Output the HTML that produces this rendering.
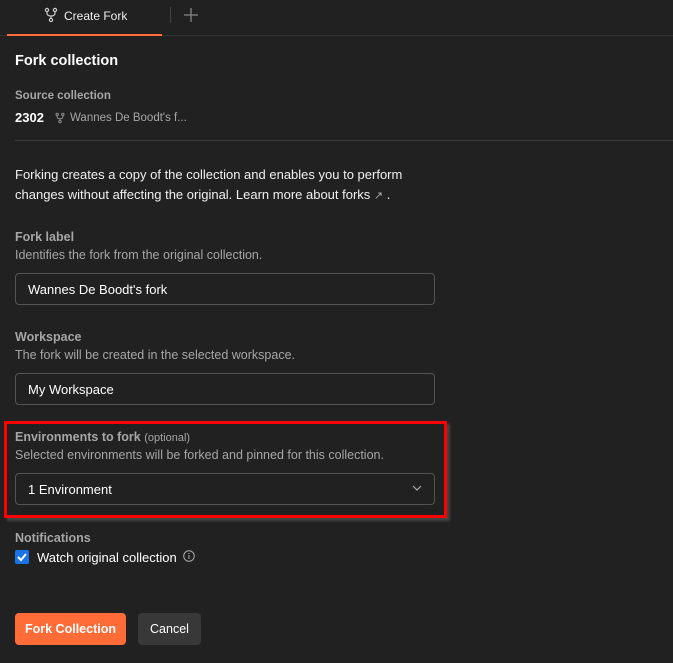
<!DOCTYPE html>
<html><head><style>
*{margin:0;padding:0;box-sizing:border-box}
body{width:673px;height:663px;background:#212121;font-family:"Liberation Sans",sans-serif;color:#fff;position:relative;overflow:hidden;font-size:13px}
.a{position:absolute;white-space:nowrap}
.lbl{color:#a6a6a6;font-weight:bold;font-size:12.5px}
.sub{color:#a6a6a6;font-size:12.5px}
.inp{position:absolute;left:15px;width:420px;height:32px;border:1px solid #555;border-radius:4px;padding:8px 12px;font-size:13px;color:#fff}
</style></head><body>
<div class="a" style="left:0;top:35px;width:673px;height:1px;background:#333"></div>
<div class="a" style="left:7px;top:34px;width:155px;height:2px;background:#ff6c37"></div>
<svg class="a" style="left:44px;top:7px" width="14" height="16" viewBox="0 0 14 16" fill="none" stroke="#ccc" stroke-width="1.2"><circle cx="3" cy="3" r="1.6"/><circle cx="11" cy="3" r="1.6"/><circle cx="7" cy="13" r="1.6"/><path d="M3 4.6v1.4q0 3 4 3q4 0 4-3V4.6M7 9v2.4"/></svg>
<div class="a" style="left:64px;top:9px;font-size:12px;color:#eee">Create Fork</div>
<div class="a" style="left:170px;top:7px;width:1px;height:16px;background:#444"></div>
<svg class="a" style="left:184px;top:8px" width="14" height="14" viewBox="0 0 14 14" stroke="#888" stroke-width="1.3"><path d="M7 0v14M0 7h14"/></svg>
<div class="a" style="left:15px;top:53px;font-size:14.5px;font-weight:bold">Fork collection</div>
<div class="a lbl" style="left:15px;top:90px;font-size:11.5px">Source collection</div>
<div class="a" style="left:15px;top:110px;font-weight:bold;font-size:13px">2302</div>
<svg class="a" style="left:55px;top:112px" width="10" height="12" viewBox="0 0 14 16" fill="none" stroke="#888" stroke-width="1.5"><circle cx="3" cy="3" r="1.6"/><circle cx="11" cy="3" r="1.6"/><circle cx="7" cy="13" r="1.6"/><path d="M3 4.6v1.4q0 3 4 3q4 0 4-3V4.6M7 9v2.4"/></svg>
<div class="a sub" style="left:70px;top:112px;font-size:11.5px">Wannes De Boodt's f...</div>
<div class="a" style="left:15px;top:140px;width:658px;height:1px;background:#3a3a3a"></div>
<div class="a" style="left:15px;top:165px;line-height:20px;font-size:13px;color:#f0f0f0">Forking creates a copy of the collection and enables you to perform<br>changes without affecting the original. Learn more about forks <span style="color:#aaa;font-size:11px">↗</span> .</div>
<div class="a lbl" style="left:15px;top:230px">Fork label</div>
<div class="a sub" style="left:15px;top:248px">Identifies the fork from the original collection.</div>
<div class="inp" style="top:273px">Wannes De Boodt's fork</div>
<div class="a lbl" style="left:15px;top:330px">Workspace</div>
<div class="a sub" style="left:15px;top:348px">The fork will be created in the selected workspace.</div>
<div class="inp" style="top:373px">My Workspace</div>
<div class="a" style="left:4px;top:421px;width:443px;height:97px;border:3px solid #f00;box-shadow:3px 3px 2px #444"></div>
<div class="a lbl" style="left:15px;top:430px">Environments to fork <span style="font-weight:normal;font-size:11px">(optional)</span></div>
<div class="a sub" style="left:15px;top:448px">Selected environments will be forked and pinned for this collection.</div>
<div class="inp" style="top:473px">1 Environment</div>
<svg class="a" style="left:412px;top:485px" width="10" height="6" viewBox="0 0 10 6" fill="none" stroke="#aaa" stroke-width="1.2"><path d="M1 1l4 4 4-4"/></svg>
<div class="a lbl" style="left:15px;top:531px">Notifications</div>
<div class="a" style="left:15px;top:550px;width:14px;height:14px;background:#1a73e8;border-radius:2px"></div>
<svg class="a" style="left:15px;top:550px" width="14" height="14" viewBox="0 0 14 14" fill="none" stroke="#fff" stroke-width="2"><path d="M3 7l3 3 5-6"/></svg>
<div class="a" style="left:37px;top:550px;font-size:13px">Watch original collection</div>
<svg class="a" style="left:183px;top:550px" width="12" height="12" viewBox="0 0 12 12" fill="none" stroke="#aaa" stroke-width="1"><circle cx="6" cy="6" r="5.3"/><path d="M6 5v4M6 3v1"/></svg>
<div class="a" style="left:15px;top:613px;width:111px;height:32px;background:#ff6c37;border-radius:4px;font-weight:bold;font-size:12.5px;text-align:center;line-height:32px">Fork Collection</div>
<div class="a" style="left:138px;top:613px;width:63px;height:32px;background:#383838;border-radius:4px;font-size:12.5px;text-align:center;line-height:32px">Cancel</div>
</body></html>
